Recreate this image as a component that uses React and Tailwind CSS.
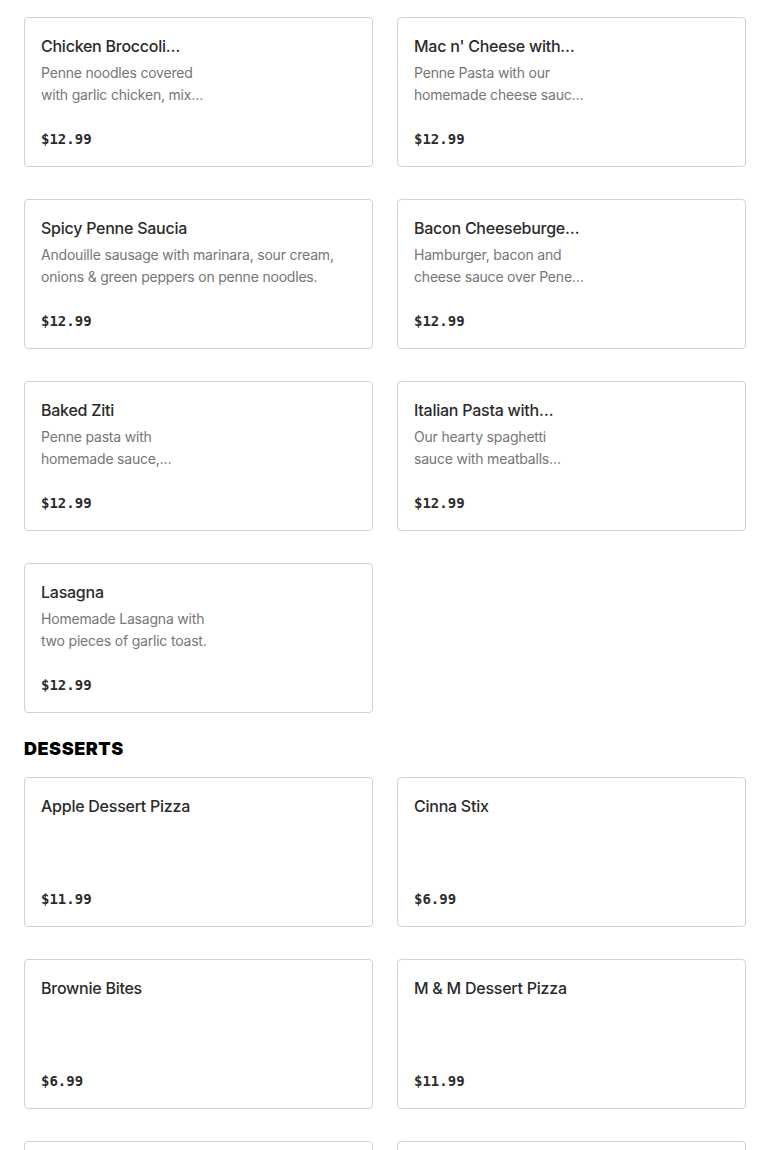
import React from "react";

const pasta = [
  { t: "Chicken Broccoli…", d: ["Penne noodles covered", "with garlic chicken, mix…"], p: "$12.99" },
  { t: "Mac n' Cheese with…", d: ["Penne Pasta with our", "homemade cheese sauc…"], p: "$12.99" },
  { t: "Spicy Penne Saucia", d: ["Andouille sausage with marinara, sour cream,", "onions & green peppers on penne noodles."], p: "$12.99" },
  { t: "Bacon Cheeseburge…", d: ["Hamburger, bacon and", "cheese sauce over Pene…"], p: "$12.99" },
  { t: "Baked Ziti", d: ["Penne pasta with", "homemade sauce,…"], p: "$12.99" },
  { t: "Italian Pasta with…", d: ["Our hearty spaghetti", "sauce with meatballs…"], p: "$12.99" },
  { t: "Lasagna", d: ["Homemade Lasagna with", "two pieces of garlic toast."], p: "$12.99" },
];

const desserts = [
  { t: "Apple Dessert Pizza", d: [], p: "$11.99" },
  { t: "Cinna Stix", d: [], p: "$6.99" },
  { t: "Brownie Bites", d: [], p: "$6.99" },
  { t: "M & M Dessert Pizza", d: [], p: "$11.99" },
  { t: "Chocolate Chip Cookie", d: [], p: "$6.99" },
  { t: "Cookie Dough Bites", d: [], p: "$6.99" },
];

function Card({ item }) {
  return (
    <div className="flex h-[150px] flex-col rounded-[4px] border border-[#d2d2d2] bg-white px-4 pt-4 pb-[17px]">
      <div className="whitespace-nowrap text-[16px] leading-6 font-medium tracking-[-0.25px] text-[#2b2b2b] [font-family:Inter,'Noto_Sans',sans-serif]">
        {item.t}
      </div>
      {item.d.length > 0 && (
        <div className="mt-1 text-[14px] leading-[22px] tracking-[-0.2px] text-[#767676] [font-family:Inter,'Noto_Sans',sans-serif]">
          {item.d.map((l, i) => (
            <div key={i} className="whitespace-nowrap">{l}</div>
          ))}
        </div>
      )}
      <div className="mt-auto text-[14px] leading-5 font-bold text-[#2b2b2b] [font-family:'DejaVu_Sans_Mono',monospace]">
        {item.p}
      </div>
    </div>
  );
}

export default function App() {
  return (
    <div className="min-h-[1150px] bg-white px-6 pt-[17px]">
      <div className="grid grid-cols-2 gap-x-6 gap-y-8">
        {pasta.map((it, i) => (
          <Card key={i} item={it} />
        ))}
      </div>
      <h2 className="mt-6 mb-4 text-[18px] leading-6 font-black uppercase tracking-[0.03em] text-black [font-family:Inter,sans-serif]">
        Desserts
      </h2>
      <div className="grid grid-cols-2 gap-x-6 gap-y-8">
        {desserts.map((it, i) => (
          <Card key={i} item={it} />
        ))}
      </div>
    </div>
  );
}
